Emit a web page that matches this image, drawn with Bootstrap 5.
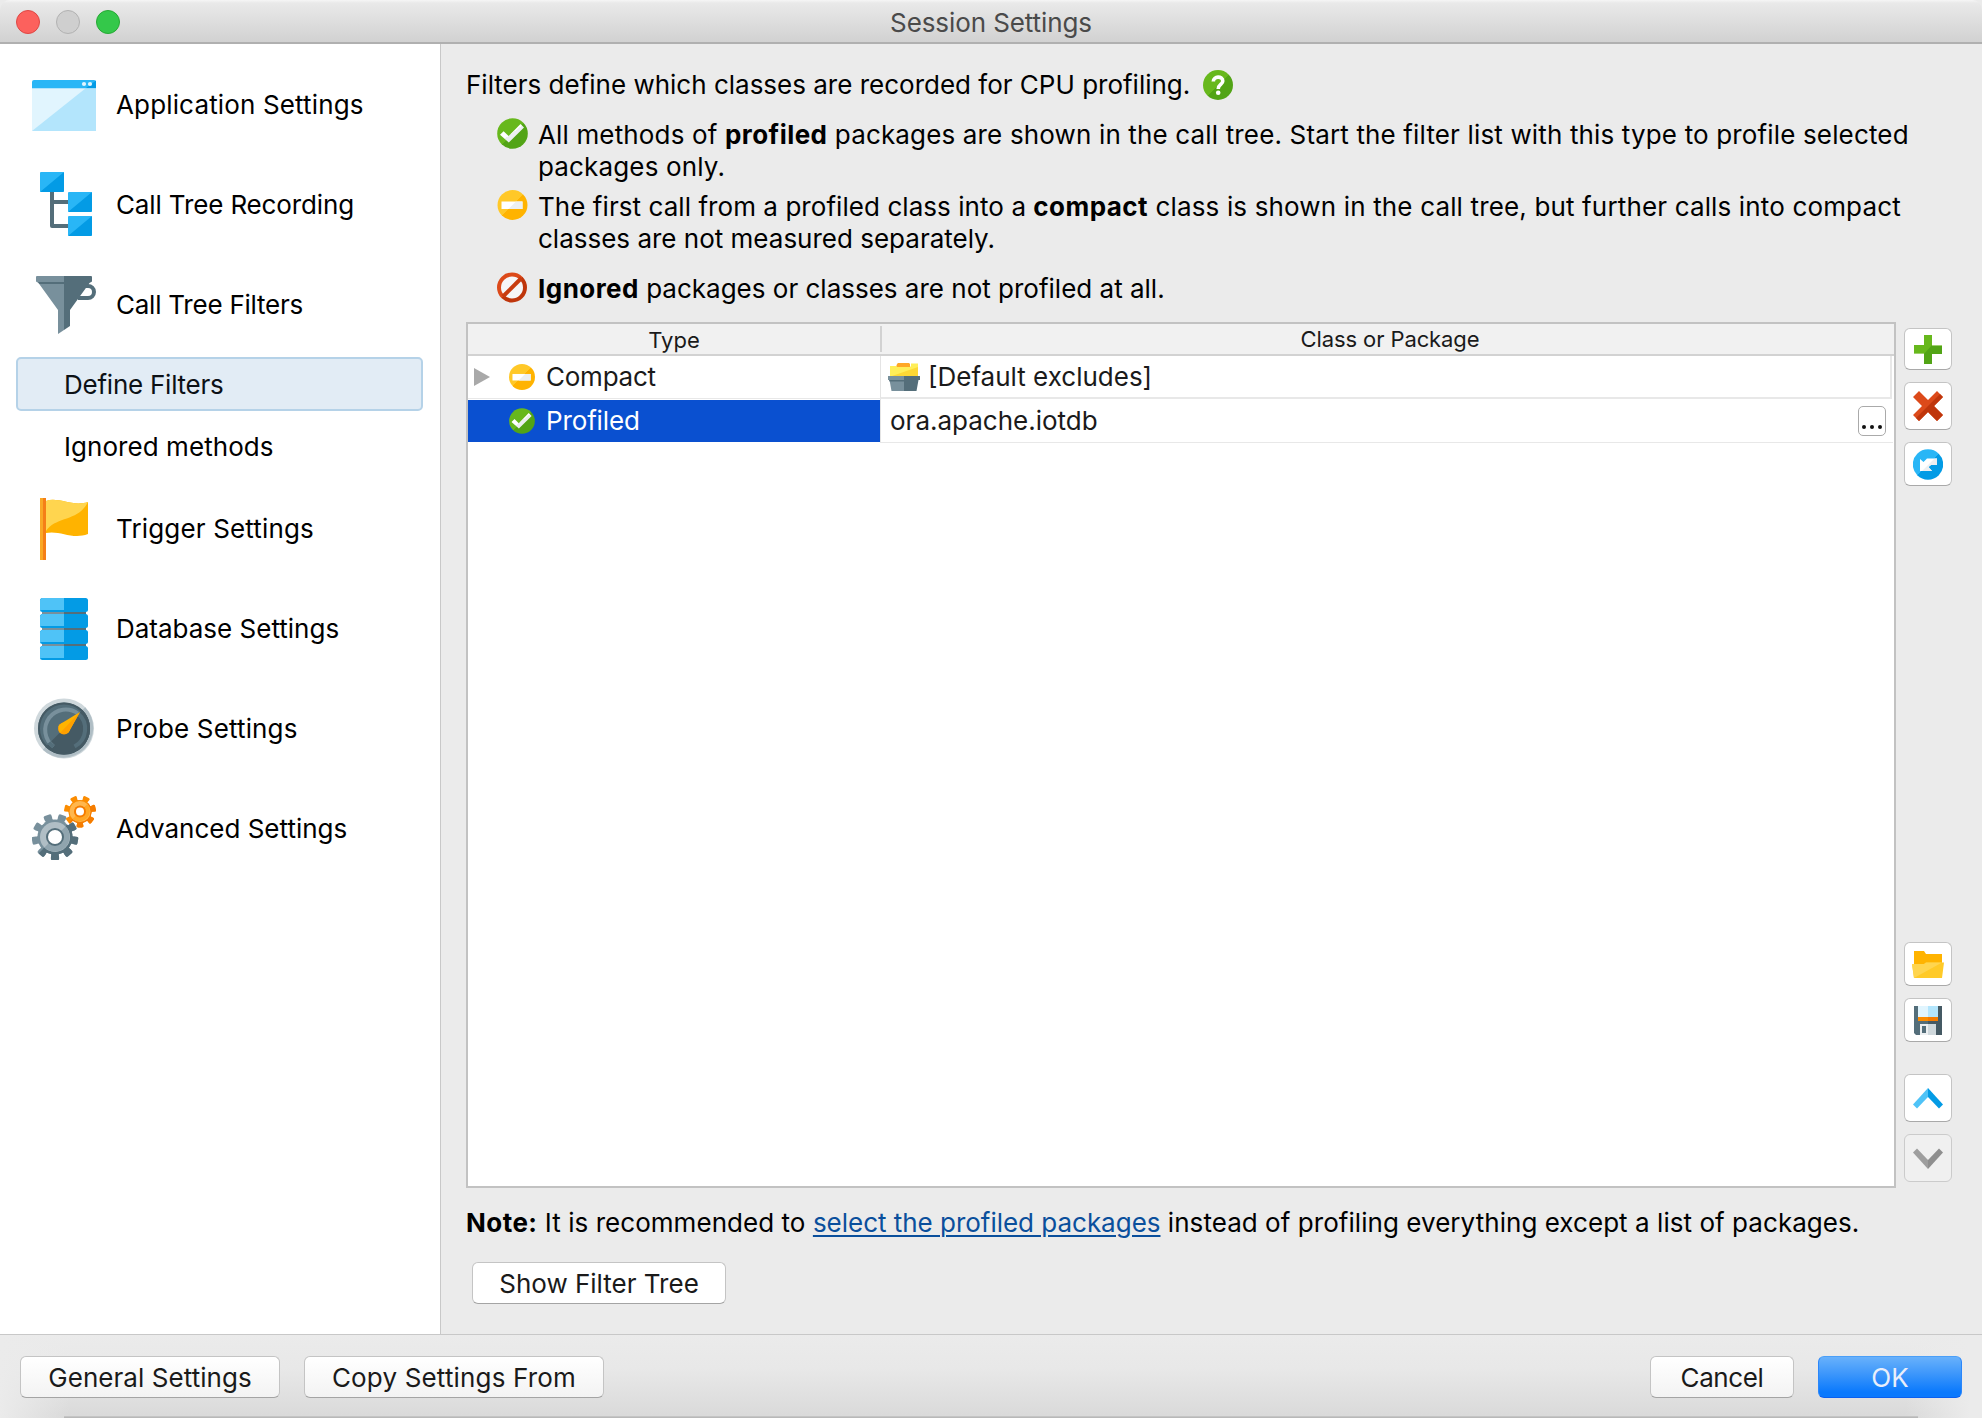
<!DOCTYPE html>
<html lang="en">
<head>
<meta charset="utf-8">
<meta name="viewport" content="width=device-width, initial-scale=1">
<title>Session Settings</title>
<link href="https://cdn.jsdelivr.net/npm/bootstrap@5.3.0/dist/css/bootstrap.min.css" rel="stylesheet">
<style>
body{font-family:Inter,Roboto,"Liberation Sans",sans-serif;font-size:26px;line-height:32px;color:#000;background:#ebebeb;width:1982px;height:1418px;overflow:hidden}
svg{display:block;flex:none}
b{font-weight:700;letter-spacing:.45px}
.titlebar{height:44px;background:linear-gradient(#f6f6f6 0,#e9e9e9 3px,#d2d2d2 41px);border-bottom:2px solid #b0b0b0;color:#4a4a4a;border-top-left-radius:10px;border-top-right-radius:10px}
.titlebar .ttl{padding-top:3px;letter-spacing:-.1px}
.lights{left:16px;top:10px;gap:16px}
.light{width:24px;height:24px;border-radius:50%;border:1px solid}
.light-r{background:#fc615d;border-color:#df4744}
.light-n{background:#cfcfcf;border-color:#b2b2b2}
.light-g{background:#34c84a;border-color:#26a934}
.main-area{height:1290px}
.side{width:441px;background:#fff;border-right:1px solid #c8c8c8;padding-top:10px}
.side-item{height:100px;padding-left:32px;gap:20px}
.side-item span{padding-top:1px}
.side-sub{height:54px;margin:0 17px 8px 16px;padding:2px 0 0 46px;border:2px solid transparent;border-radius:5px}
.side-sub.on{margin-top:3px;margin-bottom:8px;background:#e2ecf5;border-color:#b5d2e8;color:#0c1116}
.side-sub.last{margin-bottom:5px}
.panel-r{padding:24px 30px 0 25px}
.intro{height:34px;gap:13px}
.intro svg{margin-top:-1px}
.bul{padding-left:31px;gap:10px}
.bul-1{margin-top:17px}
.bul-3{margin-top:18px}
.bul svg{margin-top:-1px}
.grid-wrap{margin-top:17px}
.filters{width:1430px;height:866px;border:2px solid #c2c2c2;background:#fff}
.fhead{height:32px;background:#f1f1f1;border-bottom:2px solid #d2d2d2;font-size:22px;line-height:28px;color:#1a1a1a}
.fhead .h-class{padding:1px 0 0 4px;letter-spacing:-.1px}
.c1{width:412px;flex:none}
.fhead .c1{width:414px;border-right:2px solid #d2d2d2;height:26px;margin-top:2px}
.frow{height:44px;color:#1a1a1a}
.frow .c1{height:42px;padding-left:41px;gap:11px}
.frow .c2{border-left:1px solid #e4e4e4;border-bottom:1px solid #e8e8e8;gap:8px}
.frow.r1{height:43px}
.frow.r1 .c1{padding-left:6px;border-bottom:1px solid #e8e8e8;height:43px}
.frow.r1 .c2{border-bottom-width:2px;border-right:2px solid #e8e8e8;margin-right:2px;padding-left:7px;height:43px}
.frow.r2 .c2{padding:0 7px 0 9px;height:44px;margin-right:1px}
.frow.r2 .c1{background:#0a50d0;color:#fff;margin-top:1px}
.mark-c{margin-left:8px}
.dots{width:28px;height:30px;border:1px solid #aaa;border-radius:5px;padding:0 0 6px}
.dots i{width:4px;height:4px;border-radius:50%;background:#111}
.tools{width:48px;margin-left:8px;padding-top:6px;gap:12px}
.tool{width:48px;background:#fff;border:1px solid #c4c4c4;border-bottom-color:#a9a9a9;border-radius:6px;padding:0}
.tool:disabled{background:#f0f0f0;border-color:#cbcbcb;opacity:1}
.tool-open{margin-top:444px;padding-top:2px}
.tool-up{margin-top:20px}
.h42{height:42px}.h44{height:44px}.h48{height:48px}
.note{margin-top:19px;letter-spacing:.05px}
.note a{color:#0a4f9c;letter-spacing:-.02px;text-decoration-thickness:2px;text-underline-offset:3px}
.pbtn{height:42px;background:#fff;border:1px solid #c4c4c4;border-bottom-color:#a4a4a4;border-radius:6px;font-size:26px;line-height:32px;color:#1a1a1a;padding:1px 0 0}
.show-tree{width:254px;margin:23px 0 0 6px}
.foot{height:84px;border-top:1px solid #c8c8c8;background:linear-gradient(90deg,#ebebeb 0,rgba(235,235,235,0) 70px,rgba(235,235,235,0) 1905px,#ebebeb 1970px),linear-gradient(#ebebeb,#e8e8e8 40%,#d9d9d9);padding:21px 20px 0}
.foot .pbtn{background:linear-gradient(#fff,#f3f3f3)}
.foot .ok{background:linear-gradient(#68b1fb,#3f98fb 40%,#0a79fd 88%);border-color:#4a9ff8 #2a86fa #0a5ff0;color:#e9eefa}
.foot-line{left:64px;right:64px;bottom:0;height:2px;background:linear-gradient(#cacaca,#b2b2b2)}
.w260{width:260px}.w300{width:300px}.w144{width:144px}
.lp2{letter-spacing:.17px}.lp15{letter-spacing:.15px}.lm1{letter-spacing:-.14px}.lm2{letter-spacing:-.24px}.lp1{letter-spacing:.06px}.lm4{letter-spacing:-.4px}
</style>
</head>
<body>
<svg width="0" height="0" class="position-absolute">
<defs>
<linearGradient id="gr" x1="0" y1="0" x2="1" y2="1"><stop offset=".5" stop-color="#67b81c"/><stop offset=".5" stop-color="#52a416"/></linearGradient>
<linearGradient id="ye" x1="0" y1="0" x2="1" y2="1"><stop offset=".5" stop-color="#ffc828"/><stop offset=".5" stop-color="#ffb300"/></linearGradient>
<linearGradient id="wh" x1="0" y1="0" x2="1" y2="1"><stop offset=".5" stop-color="#fff"/><stop offset=".5" stop-color="#eceff1"/></linearGradient>
<linearGradient id="re" x1="0" y1="0" x2="1" y2="1"><stop offset=".5" stop-color="#dc4a1a"/><stop offset=".5" stop-color="#bf360c"/></linearGradient>
<linearGradient id="bl" x1="0" y1="0" x2="1" y2="1"><stop offset=".5" stop-color="#29b6f6"/><stop offset=".5" stop-color="#039be5"/></linearGradient>
<symbol id="ok" viewBox="0 0 31 31"><circle cx="15.500" cy="15.500" r="15.300" fill="url(#gr)"/><path d="M3 16.800 6.600 13.200 11.600 18.100 23.500 6 27 9.500 11.800 24.500Z" fill="url(#wh)"/></symbol>
<symbol id="mn" viewBox="0 0 30 30"><circle cx="15" cy="15" r="15" fill="url(#ye)"/><path d="M4 11.500H25V19H4Z" fill="#fff"/><path d="M18.500 11.500H25V19H11Z" fill="#eceff1"/></symbol>
<path id="t9" d="M-3.800-17-3.600-17.500Q-4.300-20-4-22.300Q-3.500-23.200-2.300-23.200H2.300Q3.500-23.200 4-22.300Q4.300-20 3.600-17.500L6-14H-6Z"/>
<path id="t7" d="M-2.800-11.500-3.500-14.800Q-3.200-15.900-2-15.900H2Q3.200-15.900 3.500-14.800L2.800-11.500 5-8.500H-5Z"/>
</defs>
</svg>

<header class="titlebar position-relative d-flex justify-content-center">
  <div class="lights position-absolute d-flex"><span class="light light-r"></span><span class="light light-n"></span><span class="light light-g"></span></div>
  <div class="ttl d-flex align-items-center">Session Settings</div>
</header>

<div class="main-area d-flex">
  <nav class="side flex-shrink-0">
    <div class="side-item d-flex align-items-center">
      <svg width="64" height="64" viewBox="0 0 64 64"><path d="M0 10a2 2 0 0 1 2-2H62a2 2 0 0 1 2 2V16H0Z" fill="#29b6f6"/><path d="M54 16 64 8.500V16Z" fill="#039be5"/><path d="M0 16H64V59H0Z" fill="#b3e5fc"/><path d="M0 16H54L0 59Z" fill="#e1f5fe"/><path d="M0 16H64V17H0Z" fill="#81d4fa" opacity=".5"/><circle cx="52" cy="12" r="2.100" fill="#e1f5fe"/><circle cx="58" cy="12" r="2.100" fill="#e1f5fe"/></svg>
      <span class="lp15">Application Settings</span>
    </div>
    <div class="side-item d-flex align-items-center">
      <svg width="64" height="64" viewBox="0 0 64 64"><path d="M20 18V54H38M20 30H38" fill="none" stroke="#546e7a" stroke-width="4" stroke-linejoin="round"/><g fill="#29b6f6"><rect x="8" width="24" height="20" rx="1"/><rect x="36" y="20" width="24" height="20" rx="1"/><rect x="36" y="44" width="24" height="20" rx="1"/></g><path d="M32 0V19L31 20H8ZM60 20V39L59 40H36ZM60 44V63L59 64H36Z" fill="#039be5"/></svg>
      <span class="lm1">Call Tree Recording</span>
    </div>
    <div class="side-item d-flex align-items-center">
      <svg width="64" height="64" viewBox="0 0 64 64"><path d="M50 14H56a6 6 0 0 1 0 12H46" fill="none" stroke="#546e7a" stroke-width="4"/><path d="M4 5a1 1 0 0 1 1-1H32V61.500V58L26 62V38L6.500 11 4 9.500Z" fill="#78909c"/><path d="M32 4H59a1 1 0 0 1 1 1V9.500L57.500 11 38 38V54L32 58Z" fill="#546e7a"/><path d="M6 10H32V12H7.300Z" fill="#546e7a"/></svg>
      <span class="lm2">Call Tree Filters</span>
    </div>
    <div class="side-sub on d-flex align-items-center lm2">Define Filters</div>
    <div class="side-sub last d-flex align-items-center lp1">Ignored methods</div>
    <div class="side-item d-flex align-items-center">
      <svg width="64" height="64" viewBox="0 0 64 64"><path d="M14 5C26 .500 40 11 56 6V38C40 44 28 34 14 37Z" fill="#ffb300"/><path d="M14 5C26 .500 40 11 56 6C46 26 24 20 14 35Z" fill="#ffd54f"/><path d="M8 2H11V64H8Z" fill="#f9a825"/><path d="M11 2H14V64H11Z" fill="#f57f17"/></svg>
      <span class="lp15">Trigger Settings</span>
    </div>
    <div class="side-item d-flex align-items-center">
      <svg width="64" height="64" viewBox="0 0 64 64"><path d="M10 15H32V51H10Z" fill="#78909c"/><path d="M32 15H54V51H32Z" fill="#546e7a"/><g fill="#039be5"><rect x="8" y="2" width="48" height="14" rx="2.500"/><rect x="8" y="18" width="48" height="14" rx="2.500"/><rect x="8" y="34" width="48" height="14" rx="2.500"/><rect x="8" y="50" width="48" height="14" rx="2.500"/></g><path d="M8 14V4l2-2H32V14ZM8 30V20l2-2H32V30ZM8 46V36l2-2H32V46ZM8 62V52l2-2H32V62Z" fill="#4fc3f7"/></svg>
      <span>Database Settings</span>
    </div>
    <div class="side-item d-flex align-items-center">
      <svg width="64" height="64" viewBox="0 0 64 64"><circle cx="32" cy="32.500" r="30" fill="#cfd8dc"/><path d="M53.200 11.300A30 30 0 0 1 10.800 53.700Z" fill="#b0bec5"/><circle cx="32" cy="32.500" r="26" fill="#546e7a"/><path d="M50.400 14.100A26 26 0 0 1 13.600 50.900Z" fill="#455a64"/><circle cx="32" cy="32.500" r="25" fill="none" stroke="#455a64" stroke-width="2"/><path d="M21.500 50.500A20 20 0 1 1 46 17.500" fill="none" stroke="#78909c" stroke-width="4"/><path d="M46 17.500A20 20 0 0 1 42.500 50.500M21.500 50.500A20 20 0 0 1 17 46.500" fill="none" stroke="#546e7a" stroke-width="4"/><circle cx="32" cy="32.500" r="6" fill="#ffa000"/><path d="M48 16 36.500 36.500 27.800 36.700 26.500 30 30 27Z" fill="#ffb300"/><path d="M48 16 37.800 34 35 37.500 28 37Z" fill="#ffa000"/></svg>
      <span class="lp15">Probe Settings</span>
    </div>
    <div class="side-item d-flex align-items-center">
      <svg width="64" height="64" viewBox="0 0 64 64"><defs><g id="gears9"><circle r="17.500"/><use href="#t9" transform="rotate(20)"/><use href="#t9" transform="rotate(60)"/><use href="#t9" transform="rotate(100)"/><use href="#t9" transform="rotate(140)"/><use href="#t9" transform="rotate(180)"/><use href="#t9" transform="rotate(220)"/><use href="#t9" transform="rotate(260)"/><use href="#t9" transform="rotate(300)"/><use href="#t9" transform="rotate(340)"/></g><g id="gears7"><circle r="11.500"/><use href="#t7" transform="rotate(180)"/><use href="#t7" transform="rotate(231.400)"/><use href="#t7" transform="rotate(282.900)"/><use href="#t7" transform="rotate(334.300)"/><use href="#t7" transform="rotate(25.700)"/><use href="#t7" transform="rotate(77.100)"/><use href="#t7" transform="rotate(128.600)"/></g><clipPath id="half"><path d="M-25 25 25-25V25Z"/></clipPath></defs>
      <g transform="translate(48 15.500)"><use href="#gears7" fill="#fb8c00"/><g clip-path="url(#half)"><use href="#gears7" fill="#f57c00"/></g><circle r="8" fill="none" stroke="#ffb74d" stroke-width="5"/><path d="M7.400-7.400A10.500 10.500 0 0 1-7.400 7.400Z" fill="#ffa726"/><circle r="6" fill="#f57c00"/><circle r="4" fill="#fff"/></g>
      <g transform="translate(23 41)"><circle r="19" fill="#fff"/><use href="#gears9" fill="#78909c"/><g clip-path="url(#half)"><use href="#gears9" fill="#546e7a"/></g><circle r="15" fill="#b0bec5"/><path d="M10.600-10.600A15 15 0 0 1-10.600 10.600Z" fill="#90a4ae"/><circle r="9" fill="#546e7a"/><circle r="7" fill="#fff"/></g></svg>
      <span>Advanced Settings</span>
    </div>
  </nav>

  <main class="panel-r flex-grow-1">
    <div class="intro d-flex align-items-center"><span>Filters define which classes are recorded for CPU profiling.</span>
      <svg width="30" height="30" viewBox="0 0 30 30"><circle cx="15" cy="15" r="15" fill="url(#gr)"/><path d="M10.300 11.500C10.300 5.800 19.800 5.800 19.800 11C19.800 14.500 15.200 14.500 15.200 19" fill="none" stroke="#fff" stroke-width="3.600"/><circle cx="15.200" cy="22.800" r="2.300" fill="#fff"/></svg></div>
    <div class="bul bul-1 d-flex"><svg width="31" height="31"><use href="#ok"/></svg><div class="lp15 text-nowrap">All methods of <b>profiled</b> packages are shown in the call tree. Start the filter list with this type to profile selected<br>packages only.</div></div>
    <div class="bul d-flex mt-2"><svg width="31" height="30"><use href="#mn"/></svg><div class="text-nowrap"><span class="lp1">The first call from a profiled class into a</span> <span class="lp15"><b>compact</b> class is shown in the call tree, but further calls into compact</span><br>classes are not measured separately.</div></div>
    <div class="bul bul-3 d-flex"><svg width="31" height="31" viewBox="0 0 31 31"><circle cx="15" cy="15.500" r="13" fill="#f6f6f8" stroke="url(#re)" stroke-width="4"/><path d="M6 24.500 24.500 6" stroke="#c83c10" stroke-width="4"/></svg><div><b>Ignored</b> packages or classes are not profiled at all.</div></div>

    <div class="grid-wrap d-flex">
      <section class="filters">
        <div class="fhead d-flex"><div class="c1 text-center">Type</div><div class="h-class flex-grow-1 text-center">Class or Package</div></div>
        <div class="frow r1 d-flex">
          <div class="c1 d-flex align-items-center"><svg width="16" height="18" viewBox="0 0 16 18"><path d="M0 0 16 9 0 18Z" fill="#a9a9a9"/></svg><svg class="mark-c" width="26" height="26"><use href="#mn"/></svg><span class="lm2">Compact</span></div>
          <div class="c2 flex-grow-1 d-flex align-items-center"><svg width="32" height="28" viewBox="0 0 32 28"><path d="M9 1 10 0H21L22 1V4H8Z" fill="#ffa726"/><path d="M2 3H8.500L9 4H22L23 3V0.500H30V13H2Z" fill="#ffee58"/><path d="M30 4V13H4Z" fill="#fdd835"/><path d="M0 13H16V28H3.500L1.500 17H0Z" fill="#78909c"/><path d="M16 13H32V17H30.500L28.500 28H16Z" fill="#546e7a"/><path d="M1 17H16V18.500H1.500Z" fill="#546e7a"/></svg><span>[Default excludes]</span></div>
        </div>
        <div class="frow r2 d-flex">
          <div class="c1 d-flex align-items-center"><svg width="26" height="26"><use href="#ok"/></svg><span class="lm1">Profiled</span></div>
          <div class="c2 flex-grow-1 d-flex align-items-center justify-content-between"><span>ora.apache.iotdb</span><button class="btn dots bg-white d-flex align-items-end justify-content-center gap-1" aria-label="Edit"><i></i><i></i><i></i></button></div>
        </div>
      </section>
      <aside class="tools d-flex flex-column">
        <button class="btn tool h42 d-flex align-items-center justify-content-center" aria-label="Add"><svg width="28" height="29" viewBox="0 0 28 29"><path d="M10 0H18V10H28V19H18V29H10V19H0V10H10Z" fill="#67b81c"/><path d="M28 10V19H18V29H10V19L18 10Z" fill="#52a416"/><path d="M0 18H10V19H0ZM18 10H28V11H18Z" fill="#9fd06e"/></svg></button>
        <button class="btn tool h48 d-flex align-items-center justify-content-center" aria-label="Remove"><svg width="30" height="30" viewBox="0 0 30 30"><path d="M6 0 15 9 24 0 30 6 21 15 30 24 24 30 15 21 6 30 0 24 9 15 0 6Z" fill="#dc4a1a"/><path d="M27 3 30 6 21 15 30 24 24 30 15 21 6 30 3 27Z" fill="#bf360c"/></svg></button>
        <button class="btn tool h44 d-flex align-items-center justify-content-center" aria-label="Reset"><svg width="30" height="31" viewBox="0 0 30 31"><circle cx="15" cy="15.500" r="15.200" fill="url(#bl)"/><path d="M7 10 10.500 13 14 9.500H24V16H18L15.500 18 19 22H7Z" fill="#fff"/><path d="M21.500 9.500H24V16H18L15.500 18 19 22H9Z" fill="#eceff1"/></svg></button>
        <button class="btn tool tool-open h44 d-flex align-items-center justify-content-center" aria-label="Open"><svg width="32" height="28" viewBox="0 0 32 28"><path d="M2 0H12L14 3H30V16H2Z" fill="#ffb300"/><path d="M0 13H12L14 11.500H32L30 27H2Z" fill="#ffca28"/><path d="M0 13H12L14 11.500H30L2 27Z" fill="#ffd54f"/></svg></button>
        <button class="btn tool h44 d-flex align-items-center justify-content-center" aria-label="Save"><svg width="28" height="29" viewBox="0 0 28 29"><path d="M0 0H14V29H2L0 27Z" fill="#546e7a"/><path d="M14 0H28V29H14Z" fill="#455a64"/><path d="M4 0H14V11H4Z" fill="#e1f5fe"/><path d="M14 0H24V11H14Z" fill="#b3e5fc"/><path d="M4 11H14V15H4Z" fill="#fb8c00"/><path d="M14 11H24V15H14Z" fill="#f57c00"/><path d="M6 18H14V29H6Z" fill="#eceff1"/><path d="M14 18H22V29H14Z" fill="#cfd8dc"/><path d="M8 20H12V27H8Z" fill="#546e7a"/></svg></button>
        <button class="btn tool tool-up h48 d-flex align-items-center justify-content-center" aria-label="Move up"><svg width="30" height="21" viewBox="0 0 30 21"><path d="M15 0V9L4 20.500 0 16.500Z" fill="#4fc3f7"/><path d="M15 0V9L26 20.500 30 16.500Z" fill="#039be5"/></svg></button>
        <button class="btn tool h48 d-flex align-items-center justify-content-center" aria-label="Move down" disabled><svg width="30" height="21" viewBox="0 0 30 21"><path d="M15 21V12L4 .500 0 4.500Z" fill="#9e9e9e"/><path d="M15 21V12L26 .500 30 4.500Z" fill="#8f8f8f"/></svg></button>
      </aside>
    </div>
    <div class="note text-nowrap"><b>Note:</b> It is recommended to <a href="#">select the profiled packages</a> instead of profiling everything except a list of packages.</div>
    <button class="btn pbtn show-tree">Show Filter Tree</button>
  </main>
</div>

<footer class="foot d-flex align-items-start position-relative">
  <button class="btn pbtn w260 lp1">General Settings</button>
  <button class="btn pbtn w300 lp2 ms-4">Copy Settings From</button>
  <button class="btn pbtn w144 lm4 ms-auto">Cancel</button>
  <button class="btn pbtn ok w144 ms-4">OK</button>
  <div class="foot-line position-absolute"></div>
</footer>
<script src="https://cdn.jsdelivr.net/npm/bootstrap@5.3.0/dist/js/bootstrap.bundle.min.js"></script>
</body>
</html>
